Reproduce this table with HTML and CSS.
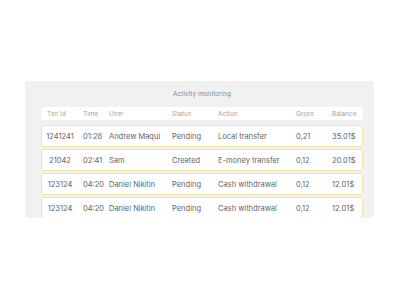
FILE: index.html
```html
<!DOCTYPE html>
<html>
<head>
<meta charset="utf-8">
<link rel="stylesheet" href="styles.css">
</head>
<body>
<div class="page">
  <div class="card">
    <div class="title">Activity monitoring</div>
    <div class="table">
      <div class="head">
        <div class="c id">Txn Id</div>
        <div class="c">Time</div>
        <div class="c">User</div>
        <div class="c">Status</div>
        <div class="c">Action</div>
        <div class="c">Gross</div>
        <div class="c">Balance</div>
      </div>
      <div class="row">
        <div class="c id">1241241</div>
        <div class="c">01:28</div>
        <div class="c">Andrew Maqui</div>
        <div class="c">Pending</div>
        <div class="c">Local transfer</div>
        <div class="c">0,21</div>
        <div class="c">35.01$</div>
      </div>
      <div class="row">
        <div class="c id">21042</div>
        <div class="c">02:41</div>
        <div class="c">Sam</div>
        <div class="c">Created</div>
        <div class="c">E-money transfer</div>
        <div class="c">0,12</div>
        <div class="c">20.01$</div>
      </div>
      <div class="row">
        <div class="c id">123124</div>
        <div class="c">04:20</div>
        <div class="c">Daniel Nikitin</div>
        <div class="c">Pending</div>
        <div class="c">Cash withdrawal</div>
        <div class="c">0,12</div>
        <div class="c">12.01$</div>
      </div>
      <div class="row">
        <div class="c id">123124</div>
        <div class="c">04:20</div>
        <div class="c">Daniel Nikitin</div>
        <div class="c">Pending</div>
        <div class="c">Cash withdrawal</div>
        <div class="c">0,12</div>
        <div class="c">12.01$</div>
      </div>
    </div>
  </div>
</div>
</body>
</html>
```
FILE: styles.css
```css
html, body {
  margin: 0;
  padding: 0;
  background: #ffffff;
}
body {
  font-family: Inter, "Liberation Sans", sans-serif;
  width: 400px;
  height: 300px;
  overflow: hidden;
}
.page {
  padding: 81px 0 0 25px;
}
.card {
  width: 349px;
  height: 137px;
  box-sizing: border-box;
  background: #f1f1f1;
  border-radius: 4px;
  padding: 8px 11px 0 16px;
  overflow: hidden;
  display: flex;
  flex-direction: column;
}
.title {
  text-align: center;
  font-size: 6.5px;
  line-height: 10px;
  color: #8c8c8c;
  height: 10px;
  margin-bottom: 8px;
}
.table {
  display: flex;
  flex-direction: column;
  gap: 2px;
}
.head, .row {
  display: grid;
  grid-template-columns: 42px 26px 63px 46px 78px 36px 1fr;
  align-items: center;
  box-sizing: border-box;
}
.head {
  height: 13px;
  background: #ffffff;
  border-radius: 3px;
  font-size: 6.5px;
  color: #a3a3a3;
  margin-bottom: 3px;
}
.head .id {
  padding-left: 6px;
}
.row {
  height: 22px;
  background: #ffffff;
  border: 1px solid #f5e4a4;
  border-radius: 3px;
  font-size: 7.5px;
  color: #646464;
  flex-shrink: 0;
}
.row .c {
  margin-left: -1px;
}
.row .id {
  text-align: center;
  padding-right: 5px;
  margin-left: -1px;
}
.c {
  white-space: nowrap;
}
```
